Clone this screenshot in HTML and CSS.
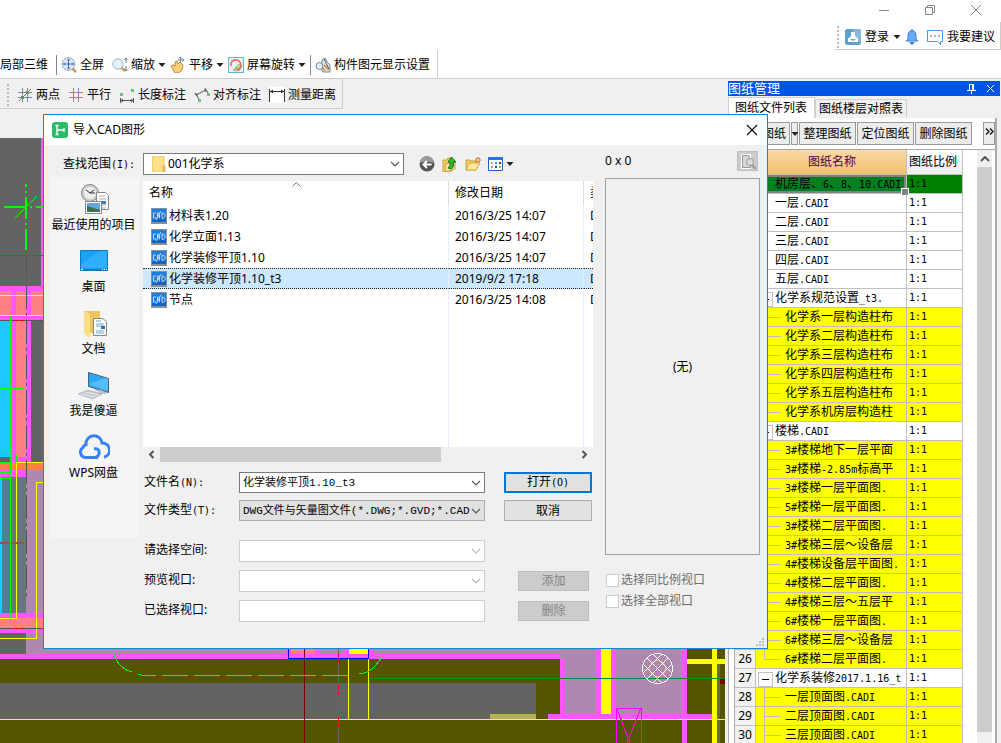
FILE: index.html
```html
<!DOCTYPE html>
<html lang="zh-CN">
<head>
<meta charset="utf-8">
<title>导入CAD图形</title>
<link rel="stylesheet" href="styles.css">
</head>
<body>
<svg class="defs" aria-hidden="true">
  <symbol id="chev" viewBox="0 0 10 6"><path d="M1 1l4 4 4-4" fill="none" stroke="currentColor" stroke-width="1.2"/></symbol>
  <symbol id="caret" viewBox="0 0 8 4"><path d="M0.500 0h7L4 4z" fill="#222"/></symbol>
  <symbol id="cad" viewBox="0 0 16 16">
    <rect width="16" height="16" fill="#8a8f96"/><rect x="1" y="1" width="14" height="13" fill="#1363c0"/><path d="M1 1h14v6L1 12z" fill="#1f7fe0"/>
    <path d="M5 5H2.500v5H5M6.500 10.500V5h2v5.500M6 8h3M11 5h1l2 1.500v2.500L12 10.500h-1zM5 12l5-9" fill="none" stroke="#c9d3de" stroke-width="1"/>
  </symbol>
</svg>
<div class="app">
  <header class="top">
    <div class="wincontrols">
      <button aria-label="最小化"><svg width="12" height="12"><path d="M1 6.500h10" stroke="#888"/></svg></button>
      <button aria-label="还原"><svg width="12" height="12"><path d="M1.500 3.500h7v7h-7zM3.500 3.500v-2h7v7h-2" fill="none" stroke="#888"/></svg></button>
      <button aria-label="关闭"><svg width="12" height="12"><path d="M1 1l10 10M11 1L1 11" stroke="#888"/></svg></button>
    </div>
    <div class="account">
      <span class="grip"></span>
      <button class="tool"><svg width="16" height="16"><rect width="16" height="16" rx="2" fill="#5ba3cf"/><path d="M8 0h6a2 2 0 0 1 2 2v12L9 9z" fill="#83bbdd"/><path d="M6 3h4v4l2 2h1v4H3V9h1l2-2z" fill="#fff"/><path d="M5 10h6l-3 2z" fill="#5ba3cf"/></svg>登录<svg class="caret"><use href="#caret"/></svg></button>
      <button class="tool" aria-label="通知"><svg width="14" height="16"><path d="M6 1h2v1l2 1 1 3v4l2 2H1l2-2V6l1-3 2-1z" fill="#6aa9f8" stroke="#3d83dc"/><path d="M4 13h6l-3 3z" fill="#3d73b8"/></svg></button>
      <button class="tool"><svg width="16" height="16"><path d="M.5 1.500h15v11h-2v3l-3-3H.5z" fill="#fff" stroke="#4d96ee"/><path d="M3 7h2M7 7h2M11 7h2" stroke="#3d73b8"/></svg>我要建议</button>
    </div>
    <div class="toolbar view">
      <button class="tool plain">局部三维</button>
      <span class="sep"></span>
      <button class="tool plain"><svg width="16" height="16"><path d="M11 11l4 4" stroke="#c89850" stroke-width="2.500"/><circle cx="7.500" cy="7" r="6.300" fill="#e3edf8" stroke="#8fa2bd"/><path d="M7.500 2v10M2.500 7h10M6 3.500L7.500 2 9 3.500M6 10.500L7.500 12 9 10.500M4 5.500L2.500 7 4 8.500M11 5.500L12.500 7 11 8.500" fill="none" stroke="#3d6cb4"/></svg>全屏</button>
      <button class="tool"><svg width="16" height="16"><path d="M9 10l4 4" stroke="#d6a14e" stroke-width="3"/><circle cx="6" cy="7" r="5.200" fill="#e8f1fa" stroke="#9db3cf"/><path d="M14 1v5M12.500 2.500L14 1l1.500 1.500M14 9v5M12.500 12.500L14 14l1.500-1.500" fill="none" stroke="#56729e"/></svg>缩放<svg class="caret"><use href="#caret"/></svg></button>
      <button class="tool"><svg width="16" height="16"><path d="M1 9l2-1 2 1V5l2-1 1 3 2-2 3 3-1 5-3 3H5z" fill="#f3cf79" stroke="#bd8d38"/><path d="M10.500 0v6M7.500 3h6M9 1.500L10.500 0 12 1.500M12.500 1.500L14 3l-1.500 1.500" fill="none" stroke="#6e85a4"/></svg>平移<svg class="caret"><use href="#caret"/></svg></button>
      <button class="tool"><svg width="16" height="16"><rect x=".5" y=".5" width="15" height="15" fill="#e4f2f4" stroke="#62b7d4"/><path d="M3 4l4-2M5 13l6-6 3 2-4 5z" fill="#bfe089" stroke="#7cc27e"/><path d="M3 9a5 5 0 1 1 8 3M13 10l-2 3-3-2" fill="none" stroke="#e36a5a" stroke-width="1.500"/></svg>屏幕旋转<svg class="caret"><use href="#caret"/></svg></button>
      <span class="sep"></span>
      <button class="tool plain"><svg width="16" height="16"><path d="M7 3l3-2 3 5 2 2v7H8l-2-3z" fill="#dfe5ec" stroke="#7b8694"/><path d="M9 8l5 5M6 9l4 5" stroke="#d89b40" stroke-width="2"/><circle cx="4.500" cy="9" r="3.500" fill="#e4eef9" stroke="#6f87a8"/><path d="M9 2l5 10" stroke="#44536a"/></svg>构件图元显示设置</button>
    </div>
  </header>

  <div class="workspace">
    <div class="left">
      <div class="toolbar measure">
        <span class="grip"></span>
        <button class="tool plain"><svg width="16" height="16"><path d="M5.500 1v14M10.500 1v14M1 5.500h14M1 10.500h14" stroke="#8088a8"/><path d="M2 14L14 2" stroke="#d05050"/><path d="M4 9h3v3H4zM9 4h3v3H9z" fill="#5a9a5a"/></svg>两点</button>
        <button class="tool plain"><svg width="16" height="16"><path d="M5.500 1v14M10.500 1v14" stroke="#8088b8"/><path d="M1 5.500h14M1 10.500h14" stroke="#c07878"/></svg>平行</button>
        <button class="tool plain"><svg width="16" height="16"><path d="M1 6h3v3H1zM12 2h3v3h-3z" fill="#6cc47a"/><path d="M1.500 11v5M14.500 11v5M2 13.500h12M4 12l-2 1.500L4 15M12 12l2 1.500L12 15" fill="none" stroke="#555"/></svg>长度标注</button>
        <button class="tool plain"><svg width="16" height="16"><path d="M4 12h3v3H4zM13 6h3v3h-3z" fill="#6cc47a"/><path d="M1 6l4 6M11 1l3 5M2 8l10-5M2 6v2h2M10 3h2v2" fill="none" stroke="#555"/></svg>对齐标注</button>
        <button class="tool plain"><svg width="16" height="16"><path d="M0 0h16v16H0z" fill="#fff"/><path d="M.5 2v13M15.500 2v13M1 4.500h14" stroke="#333"/><path d="M1 4.500L4 2.500v4zM15 4.500l-3-2v4z" fill="#333"/></svg>测量距离</button>
      </div>
      <svg class="drawing" role="img" aria-label="CAD 图形">
        <g transform="translate(0 -138)" shape-rendering="crispEdges">
          <path fill="#636363" d="M0 138h725v605H0z"/>
          <path fill="#f5f" d="M41 138h2v148h-2zM0 286h43v34H0zM11 320h20v157H0v-14h11z"/>
          <path fill="#ff8080" d="M0 291h11v24H0zM16 291h10v24H16zM31 291h12v24H31zM16 321h10v136H16z"/>
          <path fill="#1dc8ff" d="M0 321h10v136H0z"/>
          <path fill="#ff8040" d="M0 463h43v7H0z"/>
          <path fill="#af88af" d="M26 470h17v184H26z"/>
          <path fill="#508090" d="M2 477h9v136H2z"/><path fill="#687878" d="M11 477h15v136H11z"/><path fill="#1dc8ff" d="M0 477h2v136H0z"/>
          <path fill="#f5f" d="M0 613h43v20H0z"/><path fill="#ff8080" d="M0 618h43v10H0z"/>
          <path fill="#ff0" d="M0 295h43v1H0zM0 315h43v1H0zM16 462h27v1H17v156H0v-1h16zM36 482h7v1h-6v156H0v-1h36z"/>
          <path fill="#555" d="M0 320h43v1H0zM0 628h43v1H0z"/>
          <path stroke="#555" stroke-dasharray="24 4 3 4" d="M26.500 250v350"/>
          <path fill="#f00" d="M14 320h4v1h-4zM20 320h4v1h-4zM14 628h4v1h-4zM20 628h4v1h-4z"/>
          <path fill="#a05040" d="M0 542h24v2H0z"/><path fill="#008c28" d="M0 255h43v1H0z"/>
          <path fill="#0f0" d="M10 317h1v301h-1zM0 388h24v1H0zM0 455h17v7h-1v-6H0zM0 462h10v1H0zM0 472h10v1H0zM0 478h10v1H0zM4 206h23v2H4zM30 206h2v2h-2zM36 206h7v2h-7zM25 184h2v3h-2zM25 191h2v2h-2zM25 197h2v22h-2zM25 223h2v2h-2zM25 229h2v21h-2z"/>
          <path stroke="#0f0" d="M15 218l22-22"/>
          <path fill="#af88af" d="M43 649h682v5H43z"/>
          <path fill="#550" d="M0 659h725v24H0zM536 659h189v60H536zM0 720h725v23H0z"/>
          <path fill="#b0b058" d="M490 714h46v5h-46z"/>
          <path fill="#f5f" d="M0 654h560v5H0zM286 649h34v5h-34zM344 649h30v5h-30z"/>
          <path fill="#ff8080" d="M291 649h24v5h-24z"/>
          <path fill="#af88af" d="M560 649h127v65H565v-55h-5z"/>
          <path fill="#550" d="M687 649h38v65h-38z"/><path fill="#636363" d="M717 664h3v79h-3z"/>
          <path fill="#f5f" d="M560 659h5v55h-5zM596 649h5v65h-5zM611 649h5v65h-5zM682 649h5v94h-5zM548 714h164v5H548z"/>
          <path fill="#ff0" d="M349 649h19v5h-19zM601 649h10v65h-10zM712 649h5v94h-5zM687 659h38v5h-38zM0 719h725v1H0zM348 658h1v61h-1zM368 658h1v61h-1z"/>
          <path fill="#800000" d="M304 649h1v94h-1zM720 679h5v5h-5z"/><path fill="#666" d="M338 649h1v94h-1z"/>
          <path fill="#f00" d="M338 653h1v4h-1zM338 659h1v4h-1zM338 685h1v4h-1zM338 691h1v4h-1zM338 717h1v4h-1zM338 723h1v4h-1z"/>
          <path fill="none" stroke="#00f" d="M288.500 648v10.500h80V648"/>
          <path fill="#008c28" d="M369 678h356v1H369z"/>
          <path fill="none" stroke="#0f0" d="M113.500 652q4 16 18 20M138 674l3 1h15M162 675.500h26M194 675.500h26M226 675.500h26M258 675.500h26M290 675.500h26M322 675.500h26M359 674q14-1 23-18"/>
          <path fill="none" stroke="#f0f" d="M616.500 743v-34.500h25V743M617 709l11.500 30 12-30M624 750l4.500-11 4 11"/>
          <circle cx="657.500" cy="668.500" r="8" fill="none" stroke="#ffb070"/>
          <g fill="none" stroke="#fff"><circle cx="657.500" cy="668.500" r="15"/><path d="M647 658l21 21M653 654l19 19M643 664l19 19M647 679l21-21M643 673l19-19M653 683l19-19"/></g>
        </g>
      </svg>
    </div>

    <aside class="panel">
      <div class="panel-title"><span>图纸管理</span>
        <button aria-label="固定"><svg width="9" height="10"><path d="M2.500 0v6M6.500 0v6M2 .5h5M0 6.500h9M4.500 7v3M5.500 1v5" stroke="#fff"/></svg></button>
        <button aria-label="关闭"><svg width="9" height="9"><path d="M1 1l7 7M8 1L1 8" stroke="#fff"/></svg></button>
      </div>
      <div class="tabs" role="tablist"><button role="tab" aria-selected="true" class="tab active">图纸文件列表</button><button role="tab" class="tab">图纸楼层对照表</button></div>
      <div class="panel-body">
        <div class="panel-tools"><button class="add">添加图纸</button><button class="drop" aria-label="更多添加"><svg class="caret"><use href="#caret"/></svg></button><button>整理图纸</button><button>定位图纸</button><button>删除图纸</button><button class="more" aria-label="更多"><svg width="9" height="7"><path d="M1 .5l3 3-3 3M5 .5l3 3-3 3" fill="none" stroke="#111" stroke-width="1.300"/></svg></button></div>
        <div class="sheet">
          <table class="sheets">
            <colgroup><col class="c-num"><col class="c-name"><col class="c-scale"></colgroup>
            <thead><tr><th></th><th class="name">图纸名称</th><th class="scale">图纸比例</th></tr></thead>
            <tbody>
              <tr class="current"><th></th><td>机房层、<span class="m">6</span>、<span class="m">8</span>、<span class="m">10.CADI</span></td><td>1:1</td></tr>
              <tr><th></th><td>一层<span class="m">.CADI</span></td><td>1:1</td></tr>
              <tr><th></th><td>二层<span class="m">.CADI</span></td><td>1:1</td></tr>
              <tr><th></th><td>三层<span class="m">.CADI</span></td><td>1:1</td></tr>
              <tr><th></th><td>四层<span class="m">.CADI</span></td><td>1:1</td></tr>
              <tr><th></th><td>五层<span class="m">.CADI</span></td><td>1:1</td></tr>
              <tr class="group"><th></th><td>化学系规范设置<span class="m">_t3.</span></td><td>1:1</td></tr>
              <tr class="sub"><th></th><td>化学系一层构造柱布</td><td>1:1</td></tr>
              <tr class="sub"><th></th><td>化学系二层构造柱布</td><td>1:1</td></tr>
              <tr class="sub"><th></th><td>化学系三层构造柱布</td><td>1:1</td></tr>
              <tr class="sub"><th></th><td>化学系四层构造柱布</td><td>1:1</td></tr>
              <tr class="sub"><th></th><td>化学系五层构造柱布</td><td>1:1</td></tr>
              <tr class="sub last"><th></th><td>化学系机房层构造柱</td><td>1:1</td></tr>
              <tr class="group"><th></th><td>楼梯<span class="m">.CADI</span></td><td>1:1</td></tr>
              <tr class="sub"><th></th><td><span class="m">3#</span>楼梯地下一层平面</td><td>1:1</td></tr>
              <tr class="sub"><th></th><td><span class="m">3#</span>楼梯<span class="m">-2.85m</span>标高平</td><td>1:1</td></tr>
              <tr class="sub"><th></th><td><span class="m">3#</span>楼梯一层平面图<span class="m">.</span></td><td>1:1</td></tr>
              <tr class="sub"><th></th><td><span class="m">5#</span>楼梯一层平面图<span class="m">.</span></td><td>1:1</td></tr>
              <tr class="sub"><th></th><td><span class="m">3#</span>楼梯二层平面图<span class="m">.</span></td><td>1:1</td></tr>
              <tr class="sub"><th></th><td><span class="m">3#</span>楼梯三层～设备层</td><td>1:1</td></tr>
              <tr class="sub"><th></th><td><span class="m">4#</span>楼梯设备层平面图<span class="m">.</span></td><td>1:1</td></tr>
              <tr class="sub"><th></th><td><span class="m">4#</span>楼梯二层平面图<span class="m">.</span></td><td>1:1</td></tr>
              <tr class="sub"><th></th><td><span class="m">4#</span>楼梯三层～五层平</td><td>1:1</td></tr>
              <tr class="sub"><th></th><td><span class="m">6#</span>楼梯一层平面图<span class="m">.</span></td><td>1:1</td></tr>
              <tr class="sub"><th></th><td><span class="m">6#</span>楼梯三层～设备层</td><td>1:1</td></tr>
              <tr class="sub last"><th>26</th><td><span class="m">6#</span>楼梯二层平面图<span class="m">.</span></td><td>1:1</td></tr>
              <tr class="group"><th>27</th><td>化学系装修<span class="m">2017.1.16_t</span></td><td>1:1</td></tr>
              <tr class="sub"><th>28</th><td>一层顶面图<span class="m">.CADI</span></td><td>1:1</td></tr>
              <tr class="sub"><th>29</th><td>二层顶面图<span class="m">.CADI</span></td><td>1:1</td></tr>
              <tr class="sub"><th>30</th><td>三层顶面图<span class="m">.CADI</span></td><td>1:1</td></tr>
            </tbody>
          </table>
          <div class="vscroll"><svg width="10" height="6"><path d="M1 5l4-4 4 4" fill="none" stroke="#555" stroke-width="2"/></svg><span></span></div>
        </div>
      </div>
    </aside>
  </div>
</div>

<section class="dialog" role="dialog" aria-labelledby="dlg-title">
  <div class="dlg-title">
    <svg width="16" height="16"><rect width="16" height="16" rx="3" fill="#2abb67"/><path d="M5 3v10M5 8h7M12 6v4M3.500 3.500h3M3.500 12.500h3" stroke="#fff" stroke-width="1.400"/></svg>
    <h1 id="dlg-title">导入CAD图形</h1>
    <button aria-label="关闭"><svg width="12" height="12"><path d="M1 1l10 10M11 1L1 11" stroke="#111" stroke-width="1.200"/></svg></button>
  </div>
  <div class="dlg-body">
    <div class="browse">
      <div class="lookin">
        <label for="folder">查找范围<span class="m">(I):</span></label>
        <div class="combo folder">
          <svg class="ficon" width="14" height="16"><path d="M0 0h12v16H0z" fill="#ffe088"/><path d="M0 0h12v16H0z" fill="none" stroke="#eac45e"/><path d="M11 10h2v6h-2z" fill="#f3d06c" stroke="#dbb34d"/></svg>
          <select id="folder"><option>001化学系</option></select><svg class="chev"><use href="#chev"/></svg>
        </div>
        <div class="nav">
          <button aria-label="后退"><svg width="16" height="16"><circle cx="8" cy="8" r="7.500" fill="#555"/><path d="M1 7a7 7 0 0 1 14 0q-7-3-14 0z" fill="#999"/><path d="M12.500 8.500H5M8 5L4.500 8.500 8 12" fill="none" stroke="#fff" stroke-width="2"/></svg></button>
          <button aria-label="上一级"><svg width="16" height="16"><path d="M1 4h4l1-2h4v13l-9 1z" fill="#f1ce67" stroke="#c9a23c"/><path d="M3 8l10-2v7l-9 3z" fill="#fde79b" stroke="#c9a23c"/><path d="M9 13q4-2 2-7h3L9.500 1 6 6h2q1 4-2 6z" fill="#35b335" stroke="#17701b"/></svg></button>
          <button aria-label="新建文件夹"><svg width="16" height="16"><path d="M1 14V4h4l1 1h5v9z" fill="#f1ce67" stroke="#c9a23c"/><path d="M1 14l3-7h11l-4 7z" fill="#fde79b" stroke="#d2aa45"/><path d="M13 1v6M10 4h6M11 2l4 4M15 2l-4 4" stroke="#e0502c"/><circle cx="13" cy="4" r="1.300" fill="#ffcf50"/></svg></button>
          <button aria-label="查看"><svg width="16" height="16"><path d="M.5 1.500h14v13H.5z" fill="#fff" stroke="#1a63bd"/><path d="M0 1h15v3H0z" fill="#2275d4"/><path d="M3 6h2v2H3z" fill="#aab"/><path d="M7 6h2v2H7z" fill="#2c9ade"/><path d="M11 6h2v2h-2z" fill="#24418f"/><path d="M3 10h2v2H3z" fill="#f08070"/><path d="M7 10h2v2H7z" fill="#24418f"/><path d="M11 10h2v2h-2z" fill="#c8a020"/></svg><svg class="caret"><use href="#caret"/></svg></button>
        </div>
      </div>
      <div class="split">
        <nav class="places">
          <button><svg width="32" height="32"><circle cx="12" cy="11" r="8.500" fill="#ccc" stroke="#888"/><circle cx="12" cy="11" r="6" fill="#eee"/><path d="M8 8l4 3h5M12 11l4-3" fill="none" stroke="#333"/><path d="M18.500 10.500h9l3 3v14h-12z" fill="#fff" stroke="#888"/><path d="M21 14h6M21 17h7M21 23h7M21 26h7" stroke="#aaa"/><path d="M23 19h5v3h-5z" fill="#3b79bb"/><path d="M7.500 19.500h16v12h-16z" fill="#fff" stroke="#888"/><path d="M9 21h13v9H9z" fill="#62a8dc"/><path d="M9 24q7 2 13 4v2H9z" fill="#416f4c"/></svg>最近使用的项目</button>
          <button><svg width="32" height="32"><path d="M2.500 6.500h27v20h-27z" fill="#1aa2f5" stroke="#0b78bd"/><path d="M3 21L21 7h8v17H3z" fill="#30aef9"/><path d="M2 25h28v2H2z" fill="#087cc4"/><path d="M3 25.500h2M24 25.500h1M26 25.500h1M28 25.500h1" stroke="#fff"/></svg>桌面</button>
          <button><svg width="32" height="32"><path d="M6 5h16v22H9z" fill="#eec45b"/><path d="M6 5l6 3v24l-6-4z" fill="#fbdf86"/><path d="M15.500 12.500h9l4 3v14h-13z" fill="#fff" stroke="#888"/><path d="M18 15h5M18 18h8M18 20h8M18 25h8M18 27h8" stroke="#69a6d7"/><path d="M23 20h4v3h-4z" fill="#316fa8"/></svg>文档</button>
          <button><svg width="32" height="32"><path d="M10.500 4.500l20 6v14l-20-6z" fill="#2fa8f1" stroke="#4a6274"/><path d="M11 16L28 10l2 1v12z" fill="#55bdf8"/><path d="M17 22l4 1v3l8-1-6-3zM0 26l10-4 14 4-9 5z" fill="#c4c9cd" stroke="#9aa1a6" stroke-width=".5"/><path d="M3 26l14 3M7 24l14 3" stroke="#eee"/></svg>我是傻逼</button>
          <button><svg width="32" height="32"><path d="M20 27.500H7a5.500 5.500 0 0 1-2-10 5 5 0 0 1 3-3A8 8 0 0 1 24 13a7.200 7.200 0 0 1 2 14.200M16 19q6-1 5 5-1 3-4 3.500" fill="none" stroke="#3a82f0" stroke-width="3"/></svg>WPS网盘</button>
        </nav>
        <div class="main">
          <div class="files">
            <svg class="sort" width="9" height="5"><path d="M.5 4.500l4-4 4 4" fill="none" stroke="#777"/></svg>
            <table>
              <colgroup><col><col class="f-date"><col class="f-type"></colgroup>
              <thead><tr><th>名称</th><th>修改日期</th><th>类</th></tr></thead>
              <tbody>
                <tr><td><svg><use href="#cad"/></svg>材料表1.20</td><td>2016/3/25 14:07</td><td>D</td></tr>
                <tr><td><svg><use href="#cad"/></svg>化学立面1.13</td><td>2016/3/25 14:07</td><td>D</td></tr>
                <tr><td><svg><use href="#cad"/></svg>化学装修平顶1.10</td><td>2016/3/25 14:07</td><td>D</td></tr>
                <tr class="selected"><td><svg><use href="#cad"/></svg>化学装修平顶1.10_t3</td><td>2019/9/2 17:18</td><td>D</td></tr>
                <tr><td><svg><use href="#cad"/></svg>节点</td><td>2016/3/25 14:08</td><td>D</td></tr>
                <tr class="rest"><td></td><td></td><td></td></tr>
              </tbody>
            </table>
          </div>
          <div class="hscroll"><svg width="17" height="15"><path d="M10.500 4L7 7.500l3.500 3.500" fill="none" stroke="#555" stroke-width="2"/></svg><div><span></span></div><svg width="17" height="15"><path d="M6.500 4L10 7.500 6.500 11" fill="none" stroke="#555" stroke-width="2"/></svg></div>
          <div class="form name-form">
            <label for="fname">文件名<span class="m">(N):</span></label>
            <div class="combo"><input id="fname" value="化学装修平顶1.10_t3"><svg class="chev"><use href="#chev"/></svg></div>
            <button class="btn primary">打开<span class="m">(O)</span></button>
            <label for="ftype">文件类型<span class="m">(T):</span></label>
            <div class="combo grey"><select id="ftype"><option>DWG文件与矢量图文件(*.DWG;*.GVD;*.CAD</option></select><svg class="chev"><use href="#chev"/></svg></div>
            <button class="btn">取消</button>
          </div>
          <div class="form view-form">
            <label for="space">请选择空间:</label>
            <div class="combo off"><select id="space" disabled></select><svg class="chev"><use href="#chev"/></svg></div><span></span>
            <label for="vp">预览视口:</label>
            <div class="combo off"><select id="vp" disabled></select><svg class="chev"><use href="#chev"/></svg></div>
            <button class="btn small" disabled>添加</button>
            <label for="picked">已选择视口:</label>
            <div class="combo off"><input id="picked" disabled></div>
            <button class="btn small" disabled>删除</button>
          </div>
        </div>
      </div>
    </div>
    <div class="preview">
      <div class="preview-head"><span>0 x 0</span><button aria-label="预览" disabled><svg width="17" height="17"><path d="M2.500 1.500h9v14h-9z" fill="#ccc" stroke="#fff"/><path d="M3.500 2.500h5l3 3v9h-8z" fill="#d6d6d6" stroke="#999"/><circle cx="11" cy="9" r="3.500" fill="#ddd" stroke="#999"/><path d="M13 12l4 4" stroke="#999" stroke-width="2"/></svg></button></div>
      <div class="preview-box">(无)</div>
      <div class="checks">
        <label><input type="checkbox" disabled>选择同比例视口</label>
        <label><input type="checkbox" disabled>选择全部视口</label>
      </div>
    </div>
  </div>
  <svg class="resize" width="8" height="8"><path d="M6 0h2v2H6zM3 3h2v2H3zM6 3h2v2H6zM0 6h2v2H0zM3 6h2v2H3zM6 6h2v2H6z" fill="#bbb"/></svg>
</section>
</body>
</html>
```

FILE: styles.css
```css
* { box-sizing: border-box; }
body {
  margin: 0;
  height: 100vh;
  overflow: hidden;
  position: relative;
  background: #f0f0f0;
  color: #000;
  font: 12px/16px "Noto Sans", "Noto Sans CJK SC", sans-serif;
}
button, input, select { font: inherit; color: inherit; margin: 0; padding: 0; }
button { border: 0; background: none; }
svg { flex: none; display: block; }
.defs { display: none; }
.m { font: 10px/16px "DejaVu Sans Mono", monospace; }
.caret { width: 8px; height: 4px; }

/* application window */
.app { height: 100vh; display: flex; flex-direction: column; }
.top {
  background: #fff;
  border-bottom: 1px solid #ccc;
  display: flex;
  flex-direction: column;
}
.wincontrols { height: 22px; display: flex; justify-content: flex-end; gap: 34px; padding: 4px 19px 0 0; }
.wincontrols button { height: 12px; }
.account {
  align-self: flex-end;
  height: 28px;
  display: flex;
  align-items: center;
  gap: 4px;
  padding: 2px 5px 0 3px;
  border: solid #ccc;
  border-width: 0 1px 1px 0;
}
.account .tool { gap: 4px; }
.account .tool + .tool + .tool { padding-left: 4px; }
.account .grip { margin-right: 2px; }
.grip { width: 2px; height: 22px; background: repeating-linear-gradient(#bbb 0 2px, transparent 2px 4px); }
.toolbar { align-self: flex-start; display: flex; align-items: center; gap: 4px; height: 28px; padding: 2px 3px 0 0; border-right: 1px solid #ccc; }
.tool { display: flex; align-items: center; gap: 3px; white-space: nowrap; }
.tool.plain { padding-right: 4px; }
.sep { width: 1px; height: 20px; background: #888; }
.measure { height: 30px; padding: 2px 2px 0 7px; border-bottom: 1px solid #ccc; }
.measure .grip { margin-right: 4px; }

.workspace { flex: 1; min-height: 0; display: flex; gap: 3px; }
.left { flex: 1; min-width: 0; display: flex; flex-direction: column; }
.drawing { flex: 1 1 0; min-height: 0; width: 100%; margin-top: 29px; }

/* drawing manager */
.panel { width: 273px; display: flex; flex-direction: column; overflow: hidden; padding-top: 2px; }
.panel-title {
  height: 15px;
  flex: none;
  margin-right: 1px;
  padding-right: 5px;
  display: flex;
  align-items: center;
  gap: 10px;
  background: #0054e3;
  color: #fff;
}
.panel-title span { flex: 1; font-size: 13px; line-height: 15px; }
.tabs { flex: none; height: 22px; display: flex; align-items: flex-end; padding-top: 1px; }
.tab { height: 19px; padding: 0 3px; border: 1px solid #d0d0d0; border-bottom: 0; white-space: nowrap; }
.tab.active { height: 21px; padding: 0 7px 0 6px; background: #fff; }
.panel-body {
  flex: 1;
  min-height: 0;
  display: flex;
  flex-direction: column;
  margin-right: 4px;
  padding-left: 5px;
  background: #fff;
  border: solid #aaa;
  border-width: 0 2px 0 1px;
}
.panel-tools { flex: none; display: flex; gap: 1px; padding: 4px 0; height: 31px; }
.panel-tools button { width: 57px; height: 23px; padding-top: 1px; border: 1px solid #999; background: #ececec; white-space: nowrap; }
.panel-tools .add { width: 56px; }
.panel-tools .drop { width: 7px; display: flex; align-items: center; justify-content: center; }
.panel-tools .more { width: 12px; margin-left: auto; padding-bottom: 6px; display: flex; align-items: center; justify-content: center; }
.sheet { flex: 1; min-height: 0; display: flex; overflow: hidden; border: solid #aaa; border-width: 1px 0 0 1px; }
.sheets { table-layout: fixed; width: 228px; height: 0; border-collapse: separate; border-spacing: 0; }
.c-num { width: 21px; }
.c-name { width: 151px; }
.sheets th, .sheets td {
  height: 19px;
  padding: 0 0 0 2px;
  border: solid #c0c0c0;
  border-width: 0 1px 1px 0;
  font-weight: normal;
  line-height: 16px;
  text-align: left;
  white-space: nowrap;
}
.sheets thead th { height: 25px; background: linear-gradient(#fff, #eee); }
.sheets thead .name { background: linear-gradient(#f9d9a6, #efc16a); color: #500050; text-align: center; }
.sheets tbody th { padding: 0; text-align: center; background: #f2f2f2; }
.sheets td:nth-child(2) { padding-left: 19px; position: relative; }
.sheets td:nth-child(3) { font: 10px/16px "DejaVu Sans Mono", monospace; }
.sheets .sub td { background-color: #ff0; }
.sheets .sub td:nth-child(2) { padding-left: 29px; }
.sub td:nth-child(2)::before, .sub td:nth-child(2)::after { content: ""; position: absolute; left: 8px; top: 0; background: #c0c0c0; }
.sub td:nth-child(2)::before { width: 1px; height: 19px; }
.sub.last td:nth-child(2)::before { height: 10px; }
.sub td:nth-child(2)::after { top: 9px; width: 17px; height: 1px; }
.group td:nth-child(2)::before {
  content: "";
  position: absolute;
  left: 2px;
  top: 3px;
  width: 13px;
  height: 13px;
  border: 1px solid #c0c0c0;
  background: linear-gradient(#000, #000) center / 7px 1px no-repeat #fff;
}
.current td { background: #008000; }
.sheets .current td:nth-child(2) { background: #008020; box-shadow: inset 0 0 0 2px #808080; }
.current td:nth-child(2)::after {
  content: "";
  position: absolute;
  right: -3px;
  bottom: -3px;
  width: 6px;
  height: 6px;
  background: #808080;
  border: 1px solid #fff;
}
.vscroll { width: 15px; margin: 0 3px 0 auto; padding: 6px 0 11px; display: flex; flex-direction: column; align-items: center; gap: 5px; background: #f0f0f0; }
.vscroll span { flex: 1; width: 15px; background: #cdcdcd; }

/* import dialog */
.dialog {
  position: absolute;
  left: 43px;
  top: 114px;
  width: 725px;
  background: #f0f0f0;
  border: 1px solid #1883d7;
}
.dlg-title { height: 30px; display: flex; align-items: center; gap: 5px; padding: 0 9px 0 8px; background: #fff; }
.dlg-title h1 { flex: 1; margin: 0; font-size: 12px; font-weight: normal; }
.dlg-body { display: flex; gap: 12px; padding: 6px 7px 26px 6px; }
.browse { flex: 1; min-width: 0; }
.lookin { display: flex; align-items: center; height: 26px; }
.lookin label { width: 93px; padding-left: 13px; }
.combo { position: relative; display: flex; height: 22px; background: #fff; border: 1px solid #7a7a7a; }
.combo select, .combo input {
  appearance: none;
  flex: 1;
  min-width: 0;
  width: 100%;
  padding: 0 14px 0 3px;
  border: 0;
  outline: 0;
  background: none;
  color: #000;
  font: 11px/18px "Liberation Mono", "Noto Sans CJK SC", monospace;
}
.chev { position: absolute; right: 3px; top: 7px; width: 10px; height: 6px; color: #555; pointer-events: none; }
.combo.grey { background: #e1e1e1; border-color: #adadad; }
.combo.off { border-color: #ccc; }
.off .chev { color: #bbb; }
.folder { width: 261px; }
.folder .ficon { margin: 2px 0 0 8px; }
.folder select { padding-left: 2px; font: 12px/18px "Noto Sans", "Noto Sans CJK SC", sans-serif; }
.nav { display: flex; align-items: center; gap: 7px; padding-left: 15px; }
.nav button { display: flex; align-items: center; gap: 2px; }
.split { display: flex; align-items: flex-start; gap: 4px; }
.places { width: 89px; height: 361px; padding-top: 5px; background: #f5f5f5; }
.places button { width: 100%; height: 62px; padding-right: 2px; display: flex; flex-direction: column; align-items: center; gap: 3px; white-space: nowrap; }
.main { flex: 1; min-width: 0; padding-top: 4px; }
.files { position: relative; height: 266px; background: #fff; overflow: hidden; }
.sort { position: absolute; left: 149px; top: 1px; }
.files table { width: 100%; height: 266px; table-layout: fixed; border-collapse: separate; border-spacing: 0; }
.f-date { width: 135px; }
.f-type { width: 9px; }
.files th, .files td { height: 21px; padding: 0 0 0 6px; text-align: left; font-weight: normal; white-space: nowrap; overflow: hidden; border-right: 1px solid #e5effb; }
.files th { height: 24px; border-color: #ddd; }
.files th:last-child, .files td:last-child { border-right: 0; }
.files td:first-child { padding-left: 8px; }
.files td svg { display: inline-block; width: 16px; height: 16px; margin-right: 2px; vertical-align: top; }
.files .selected td { background: #cce8ff; border-top: 1px dotted #222; border-bottom: 1px dotted #222; }
.files .rest td { height: auto; }
.hscroll { display: flex; height: 15px; }
.hscroll div { flex: 1; display: flex; }
.hscroll span { width: 67.5%; background: #cdcdcd; }
.form { display: grid; grid-template-columns: 96px 246px 1fr; align-items: center; }
.form label { padding-left: 1px; white-space: nowrap; }
.name-form { grid-auto-rows: 21px; row-gap: 7px; margin-top: 10px; }
.name-form .combo { height: 21px; }
.view-form { grid-auto-rows: 22px; row-gap: 8px; margin-top: 19px; }
.view-form label { padding-bottom: 2px; }
.form .btn { justify-self: end; width: 88px; height: 21px; margin-right: 1px; border: 1px solid #adadad; background: #e1e1e1; }
.form .primary { border: 2px solid #0078d7; }
.form .small { width: 71px; height: 20px; margin-right: 4px; background: #ccc; border-color: #bfbfbf; color: #838383; }

.preview { width: 155px; }
.preview-head { display: flex; justify-content: space-between; align-items: center; height: 20px; padding-right: 2px; }
.preview-head button { width: 21px; height: 20px; padding: 1px; background: #ccc; border: 1px solid #bfbfbf; }
.preview-box { height: 377px; margin-top: 7px; display: flex; align-items: center; justify-content: center; border: 1px solid #a0a0a0; }
.checks { padding: 17px 0 0 1px; display: flex; flex-direction: column; gap: 5px; color: #6d6d6d; }
.checks label { display: flex; align-items: center; gap: 2px; white-space: nowrap; }
.checks input { appearance: none; width: 13px; height: 13px; border: 1px solid #ccc; background: #fff; }
.resize { position: absolute; right: 3px; bottom: 2px; }
```
